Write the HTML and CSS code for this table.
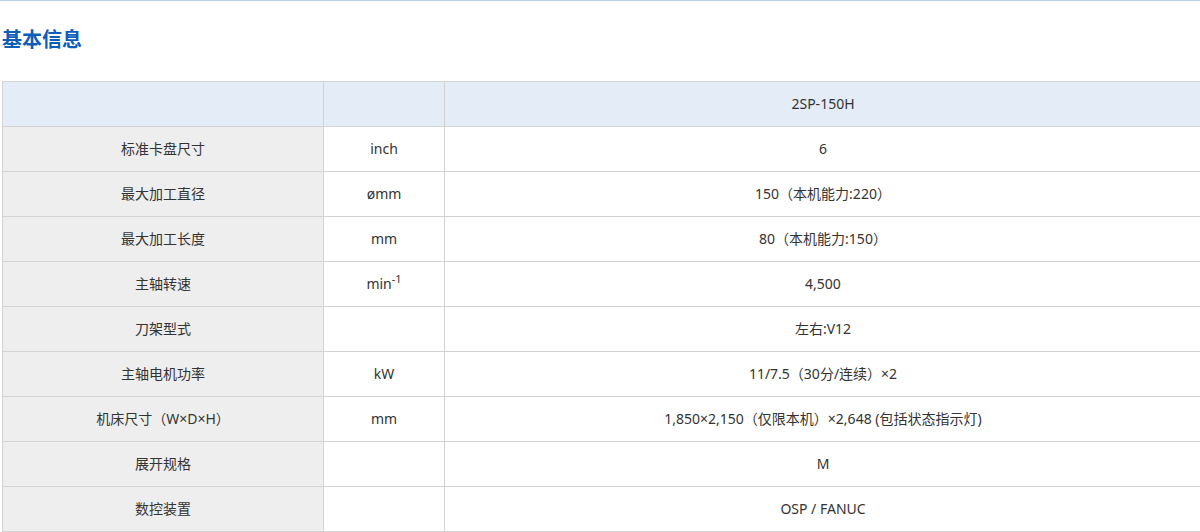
FILE: index.html
```html
<!DOCTYPE html>
<html lang="zh-CN">
<head>
<meta charset="utf-8">
<title>基本信息</title>
<link rel="stylesheet" href="styles.css">
</head>
<body>
<div class="topline"></div>
<section class="info">
  <h2 class="title">基本信息</h2>
  <table class="spec">
    <colgroup>
      <col class="c-label">
      <col class="c-unit">
      <col class="c-value">
    </colgroup>
    <thead>
      <tr><th></th><th></th><th>2SP-150H</th></tr>
    </thead>
    <tbody>
      <tr><td class="label">标准卡盘尺寸</td><td>inch</td><td>6</td></tr>
      <tr><td class="label">最大加工直径</td><td>ømm</td><td>150（本机能力:220）</td></tr>
      <tr><td class="label">最大加工长度</td><td>mm</td><td>80（本机能力:150）</td></tr>
      <tr><td class="label">主轴转速</td><td>min<sup>-1</sup></td><td>4,500</td></tr>
      <tr><td class="label">刀架型式</td><td></td><td>左右:V12</td></tr>
      <tr><td class="label">主轴电机功率</td><td>kW</td><td>11/7.5（30分/连续）×2</td></tr>
      <tr><td class="label">机床尺寸（W×D×H）</td><td>mm</td><td>1,850×2,150（仅限本机）×2,648 (包括状态指示灯)</td></tr>
      <tr><td class="label">展开规格</td><td></td><td>M</td></tr>
      <tr><td class="label">数控装置</td><td></td><td>OSP / FANUC</td></tr>
    </tbody>
  </table>
</section>
</body>
</html>
```

FILE: styles.css
```css
html, body {
  margin: 0;
  padding: 0;
  background: #fff;
  overflow: hidden;
}
body {
  font-family: "Noto Sans", "Noto Sans CJK SC", sans-serif;
  color: #333;
}
.topline {
  height: 1px;
  background: #b3d4f0;
}
.info {
  padding-left: 2px;
}
.title {
  margin: 24px 0 28px 0;
  font-size: 20px;
  line-height: 28px;
  font-weight: 700;
  color: #0d5eb8;
  font-family: "Noto Sans CJK SC", sans-serif;
}
.spec {
  border-collapse: collapse;
  width: 1200px;
  table-layout: fixed;
  font-size: 14px;
}
.c-label { width: 321px; }
.c-unit { width: 121px; }
.spec th, .spec td {
  border: 1px solid #d3d3d3;
  height: 44px;
  padding: 0;
  text-align: center;
  vertical-align: middle;
  font-weight: 400;
  line-height: 20px;
}
.spec thead th {
  background: #e4ecf7;
}
.spec td.label {
  background: #eeeeee;
}
.spec sup {
  font-size: 11px;
  line-height: 0;
  vertical-align: 6px;
}
```
